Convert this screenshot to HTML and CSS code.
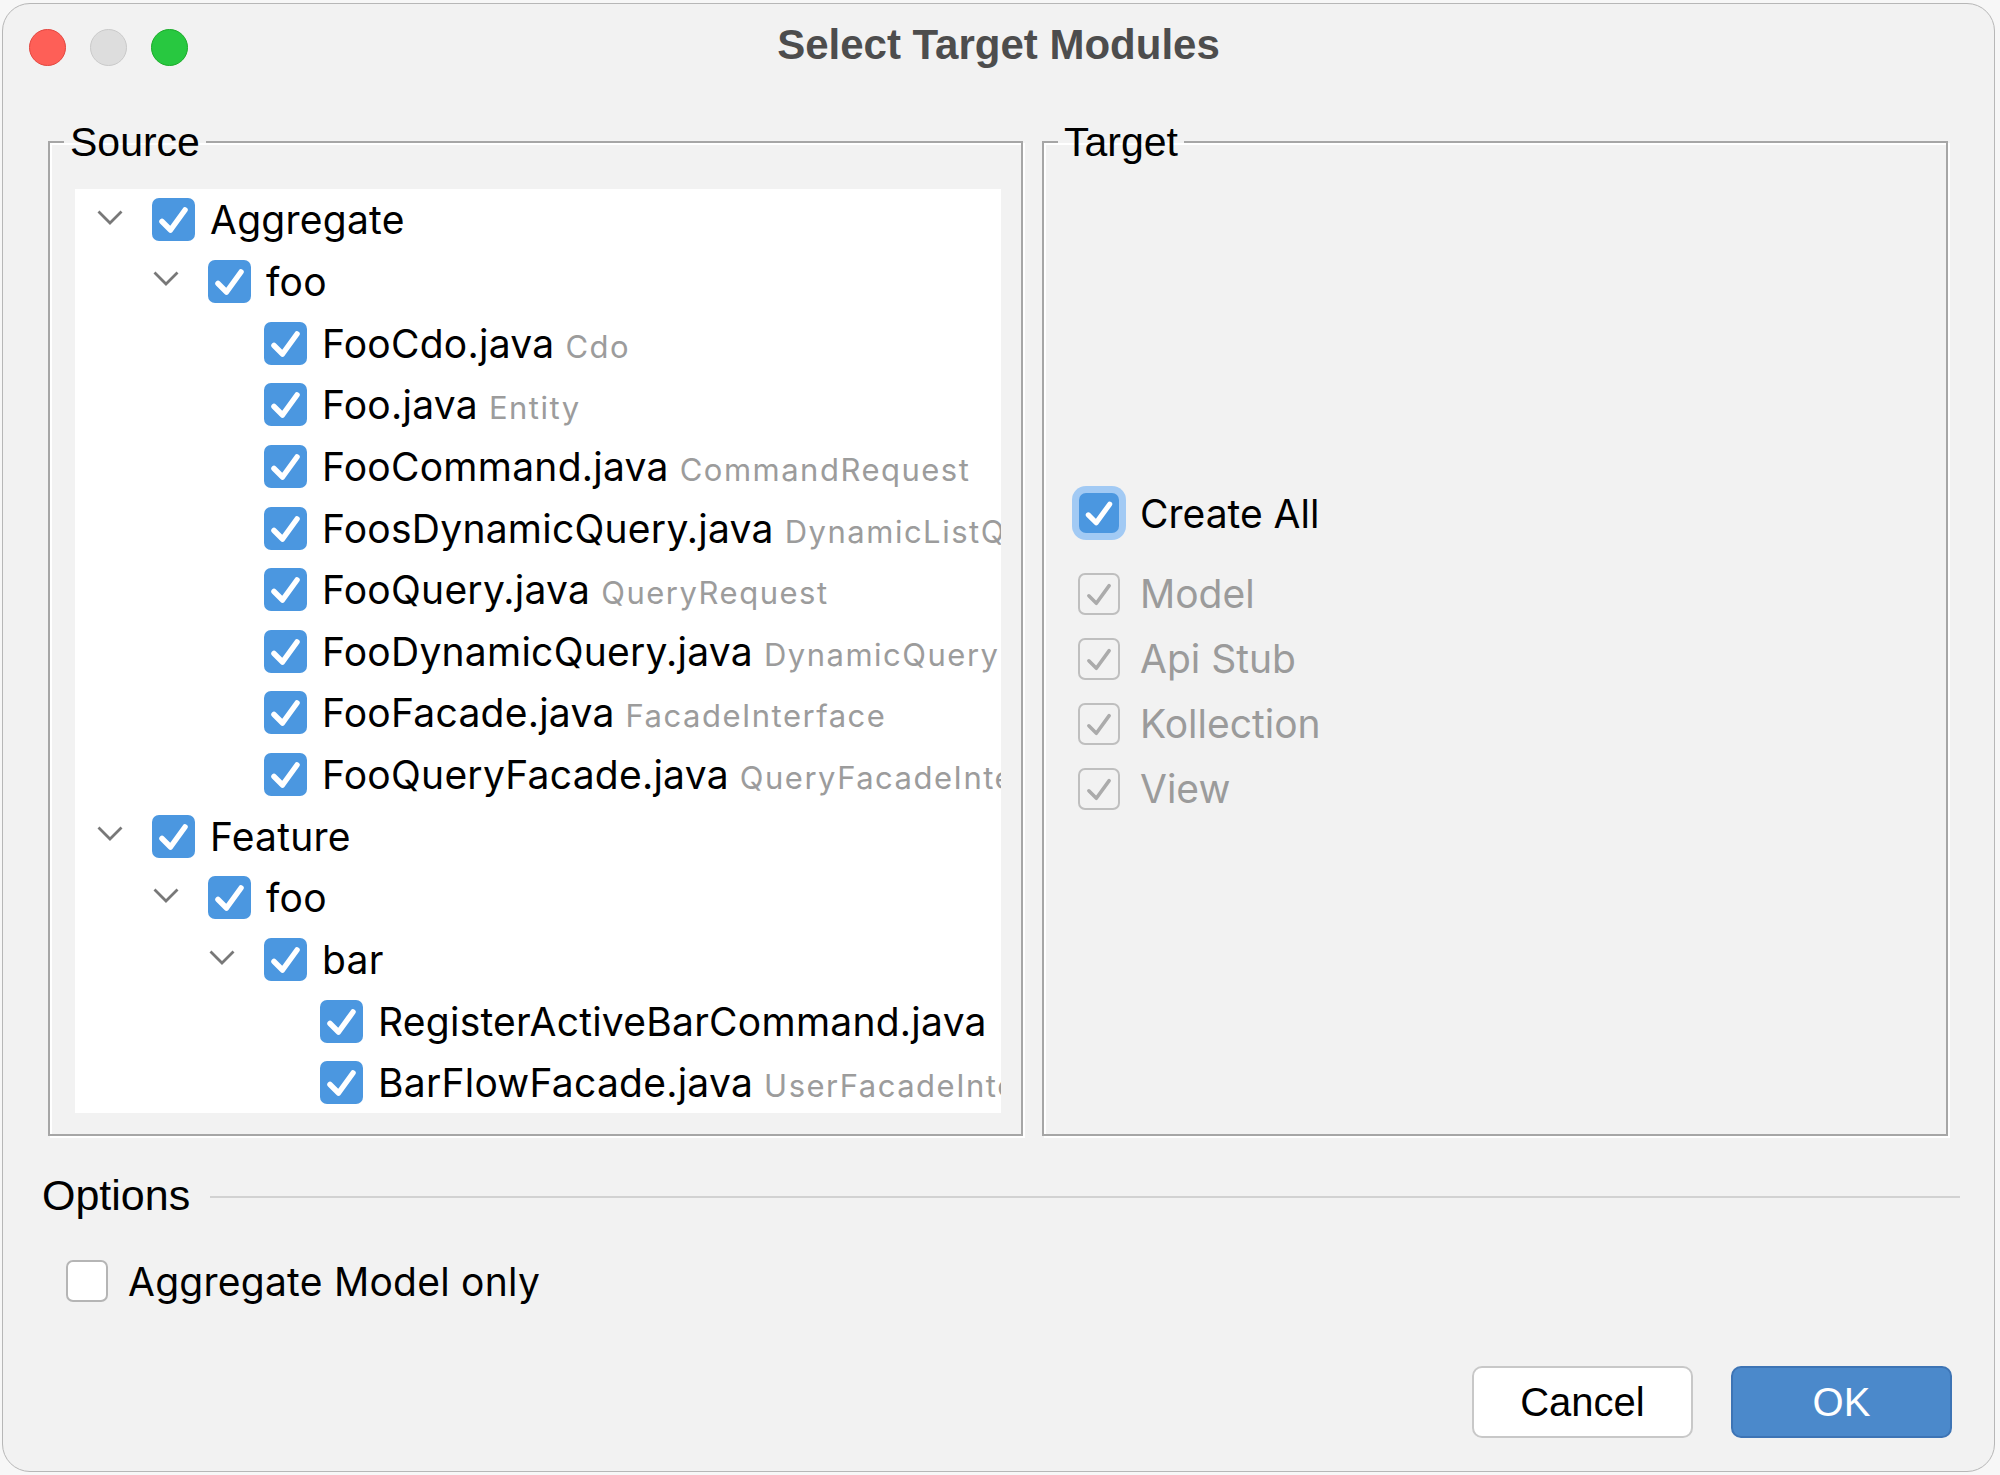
FILE: index.html
```html
<!DOCTYPE html>
<html lang="en">
<head>
<meta charset="utf-8">
<title>Select Target Modules</title>
<link rel="stylesheet" href="styles.css">
</head>
<body>
<div class="window">
  <div class="titlebar">
    <div class="lights">
      <span class="light red"></span>
      <span class="light idle"></span>
      <span class="light green"></span>
    </div>
    <div class="title">Select Target Modules</div>
    <div></div>
  </div>

  <div class="groups">
    <fieldset class="group source">
      <legend>Source</legend>
      <div class="tree">
        <div class="row l0"><span class="chev"><svg viewBox="0 0 26 15"><path d="M1.5 1.5 L13 13 L24.5 1.5"/></svg></span><span class="cb on"><svg viewBox="0 0 43 43"><path d="M10 23.5 L18.5 32 L33 12"/></svg></span><span class="label"><span class="name">Aggregate</span></span></div>
        <div class="row l1"><span class="chev"><svg viewBox="0 0 26 15"><path d="M1.5 1.5 L13 13 L24.5 1.5"/></svg></span><span class="cb on"><svg viewBox="0 0 43 43"><path d="M10 23.5 L18.5 32 L33 12"/></svg></span><span class="label"><span class="name">foo</span></span></div>
        <div class="row l2"><span class="chev"></span><span class="cb on"><svg viewBox="0 0 43 43"><path d="M10 23.5 L18.5 32 L33 12"/></svg></span><span class="label"><span class="name">FooCdo.java</span><span class="hint">Cdo</span></span></div>
        <div class="row l2"><span class="chev"></span><span class="cb on"><svg viewBox="0 0 43 43"><path d="M10 23.5 L18.5 32 L33 12"/></svg></span><span class="label"><span class="name">Foo.java</span><span class="hint">Entity</span></span></div>
        <div class="row l2"><span class="chev"></span><span class="cb on"><svg viewBox="0 0 43 43"><path d="M10 23.5 L18.5 32 L33 12"/></svg></span><span class="label"><span class="name">FooCommand.java</span><span class="hint">CommandRequest</span></span></div>
        <div class="row l2"><span class="chev"></span><span class="cb on"><svg viewBox="0 0 43 43"><path d="M10 23.5 L18.5 32 L33 12"/></svg></span><span class="label"><span class="name">FoosDynamicQuery.java</span><span class="hint">DynamicListQuery</span></span></div>
        <div class="row l2"><span class="chev"></span><span class="cb on"><svg viewBox="0 0 43 43"><path d="M10 23.5 L18.5 32 L33 12"/></svg></span><span class="label"><span class="name">FooQuery.java</span><span class="hint">QueryRequest</span></span></div>
        <div class="row l2"><span class="chev"></span><span class="cb on"><svg viewBox="0 0 43 43"><path d="M10 23.5 L18.5 32 L33 12"/></svg></span><span class="label"><span class="name">FooDynamicQuery.java</span><span class="hint">DynamicQueryRequest</span></span></div>
        <div class="row l2"><span class="chev"></span><span class="cb on"><svg viewBox="0 0 43 43"><path d="M10 23.5 L18.5 32 L33 12"/></svg></span><span class="label"><span class="name">FooFacade.java</span><span class="hint">FacadeInterface</span></span></div>
        <div class="row l2"><span class="chev"></span><span class="cb on"><svg viewBox="0 0 43 43"><path d="M10 23.5 L18.5 32 L33 12"/></svg></span><span class="label"><span class="name">FooQueryFacade.java</span><span class="hint">QueryFacadeInterface</span></span></div>
        <div class="row l0"><span class="chev"><svg viewBox="0 0 26 15"><path d="M1.5 1.5 L13 13 L24.5 1.5"/></svg></span><span class="cb on"><svg viewBox="0 0 43 43"><path d="M10 23.5 L18.5 32 L33 12"/></svg></span><span class="label"><span class="name">Feature</span></span></div>
        <div class="row l1"><span class="chev"><svg viewBox="0 0 26 15"><path d="M1.5 1.5 L13 13 L24.5 1.5"/></svg></span><span class="cb on"><svg viewBox="0 0 43 43"><path d="M10 23.5 L18.5 32 L33 12"/></svg></span><span class="label"><span class="name">foo</span></span></div>
        <div class="row l2"><span class="chev"><svg viewBox="0 0 26 15"><path d="M1.5 1.5 L13 13 L24.5 1.5"/></svg></span><span class="cb on"><svg viewBox="0 0 43 43"><path d="M10 23.5 L18.5 32 L33 12"/></svg></span><span class="label"><span class="name">bar</span></span></div>
        <div class="row l3"><span class="chev"></span><span class="cb on"><svg viewBox="0 0 43 43"><path d="M10 23.5 L18.5 32 L33 12"/></svg></span><span class="label"><span class="name">RegisterActiveBarCommand.java</span></span></div>
        <div class="row l3"><span class="chev"></span><span class="cb on"><svg viewBox="0 0 43 43"><path d="M10 23.5 L18.5 32 L33 12"/></svg></span><span class="label"><span class="name">BarFlowFacade.java</span><span class="hint">UserFacadeInterface</span></span></div>
      </div>
    </fieldset>

    <fieldset class="group target">
      <legend>Target</legend>
      <div class="targets">
        <div class="t-row create"><span class="cb on focus"><svg viewBox="0 0 43 43"><path d="M10 23.5 L18.5 32 L33 12"/></svg></span><span class="t-text">Create All</span></div>
        <div class="t-row"><span class="cb dis"><svg viewBox="0 0 43 43"><path d="M10 23.5 L18.5 32 L33 12"/></svg></span><span class="t-text muted">Model</span></div>
        <div class="t-row"><span class="cb dis"><svg viewBox="0 0 43 43"><path d="M10 23.5 L18.5 32 L33 12"/></svg></span><span class="t-text muted">Api Stub</span></div>
        <div class="t-row"><span class="cb dis"><svg viewBox="0 0 43 43"><path d="M10 23.5 L18.5 32 L33 12"/></svg></span><span class="t-text muted">Kollection</span></div>
        <div class="t-row"><span class="cb dis"><svg viewBox="0 0 43 43"><path d="M10 23.5 L18.5 32 L33 12"/></svg></span><span class="t-text muted">View</span></div>
      </div>
    </fieldset>
  </div>

  <div class="options">
    <div class="options-head"><span class="options-title">Options</span><span class="rule"></span></div>
    <div class="opt-row"><span class="cb empty"></span><span class="t-text wide">Aggregate Model only</span></div>
  </div>

  <div class="footer">
    <button class="btn">Cancel</button>
    <button class="btn primary">OK</button>
  </div>
</div>
</body>
</html>
```

FILE: styles.css
```css
html, body {
  margin: 0;
  padding: 0;
}
body {
  background: #f7f7f7;
  width: 2000px;
  height: 1475px;
  overflow: hidden;
  font-family: Inter, "Noto Sans", sans-serif;
  color: #111;
}
.window {
  box-sizing: border-box;
  margin: 3px 5px 0 2px;
  width: 1993px;
  height: 1469px;
  background: #f2f2f2;
  border: 1px solid #b7b7b7;
  border-radius: 28px;
  display: flex;
  flex-direction: column;
  overflow: hidden;
}

/* title bar */
.titlebar {
  height: 86px;
  flex: none;
  display: grid;
  grid-template-columns: 1fr auto 1fr;
  align-items: center;
}
.lights {
  display: flex;
  gap: 24px;
  padding-left: 26px;
}
.light {
  width: 37px;
  height: 37px;
  border-radius: 50%;
  box-sizing: border-box;
}
.light.red { background: #fe5f57; border: 1px solid #e2463f; }
.light.idle { background: #dddddd; border: 1px solid #c9c9c9; }
.light.green { background: #28c840; border: 1px solid #1aab29; }
.title {
  font-family: "Liberation Sans", Arial, sans-serif;
  font-weight: bold;
  font-size: 42px;
  color: #4d4d4d;
  margin-top: -4px;
}

/* groups */
.groups {
  display: flex;
  gap: 19px;
  height: 1018px;
  margin: 28px 46px 0 45px;
  flex: none;
}
.group {
  margin: 0;
  min-width: 0;
  border: 2px solid #a6a6a6;
  box-shadow: inset 2px 2px 0 #ffffff, 2px 2px 0 #ffffff;
  padding: 23px 20px 21px 14px;
  display: flex;
  flex-direction: column;
}
.group legend {
  font-family: "Liberation Sans", Arial, sans-serif;
  font-size: 41px;
  line-height: 48px;
  height: 48px;
  padding: 0 6px;
  color: #000;
}
.source { width: 975px; box-sizing: border-box; flex: none; }
.target { flex: 1; box-sizing: border-box; }

/* tree */
.tree {
  flex: 1;
  background: #ffffff;
  margin-left: 11px;
  overflow: hidden;
}
.row {
  display: flex;
  align-items: center;
  height: 61.65px;
  white-space: nowrap;
}
.l0 { padding-left: 22px; }
.l1 { padding-left: 78px; }
.l2 { padding-left: 134px; }
.l3 { padding-left: 190px; }
.chev {
  width: 55px;
  flex: none;
  display: flex;
  align-items: center;
}
.chev svg {
  width: 26px;
  height: 15px;
  margin-top: -5px;
  fill: none;
  stroke: #787878;
  stroke-width: 2.8;
}
.cb {
  width: 43px;
  height: 43px;
  flex: none;
  box-sizing: border-box;
  border-radius: 7px;
  display: flex;
}
.cb svg {
  width: 100%;
  height: 100%;
  fill: none;
  stroke-linecap: round;
  stroke-linejoin: round;
}
.cb.on {
  background: #4b97e0;
}
.cb.on svg {
  stroke: #ffffff;
  stroke-width: 5.5;
}
.label {
  margin-left: 15px;
  white-space: nowrap;
}
.name {
  font-size: 39px;
  letter-spacing: 0.25px;
  color: #000;
}
.hint {
  font-size: 31px;
  letter-spacing: 1.5px;
  color: #9c9c9c;
  margin-left: 11px;
}

/* target */
.targets {
  flex: 1;
  display: flex;
  flex-direction: column;
  justify-content: center;
  padding-left: 20px;
}
.t-row {
  display: flex;
  align-items: center;
  height: 65px;
}
.t-row.create {
  height: 64px;
  margin-bottom: 16px;
}
.cb.focus {
  width: 40px;
  height: 40px;
  margin-left: 1px;
  border-radius: 7px;
  box-shadow: 0 0 0 7px #a2caf4;
}
.cb.focus + .t-text {
  margin-left: 21px;
}
.cb.dis {
  width: 42px;
  height: 42px;
  border: 2px solid #bfbfbf;
  background: transparent;
}
.cb.dis svg {
  stroke: #ababab;
  stroke-width: 4;
}
.t-text {
  font-size: 39px;
  color: #000;
  margin-left: 20px;
  white-space: nowrap;
}
.t-text.wide {
  letter-spacing: 0.25px;
}
.t-text.muted {
  color: #9b9b9b;
}

/* options */
.options {
  margin: 34px 34px 0 39px;
  flex: none;
}
.options-head {
  display: flex;
  align-items: center;
  height: 50px;
  gap: 20px;
}
.options-title {
  font-family: "Liberation Sans", Arial, sans-serif;
  font-size: 43px;
  color: #000;
}
.rule {
  flex: 1;
  height: 2px;
  background: #d2d2d2;
  margin-top: 4px;
}
.opt-row {
  display: flex;
  align-items: center;
  height: 62px;
  margin-top: 30px;
  padding-left: 24px;
}
.cb.empty {
  width: 42px;
  height: 42px;
  background: #ffffff;
  border: 2px solid #b5b5b5;
}

/* footer */
.footer {
  margin-top: auto;
  display: flex;
  justify-content: flex-end;
  gap: 38px;
  padding: 0 42px 33px 0;
}
.btn {
  width: 221px;
  height: 72px;
  box-sizing: border-box;
  border-radius: 10px;
  font-family: "Liberation Sans", Arial, sans-serif;
  font-size: 40px;
  border: 2px solid #c8c8c8;
  background: #ffffff;
  color: #000;
  padding: 0;
}
.btn.primary {
  background: #4b89cb;
  border-color: #3d74b5;
  color: #ffffff;
}
```
